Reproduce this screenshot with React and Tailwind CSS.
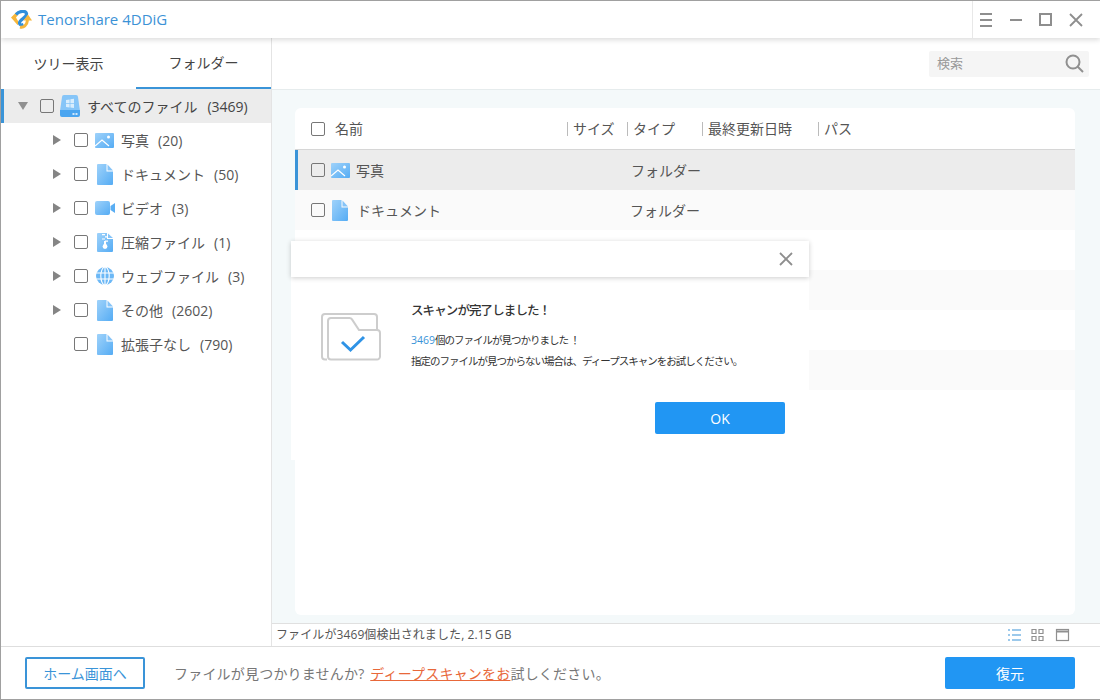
import { useId, useState } from "react";

const categories = [
  { name: "写真", count: 20, icon: "photo", arrow: true },
  { name: "ドキュメント", count: 50, icon: "doc", arrow: true },
  { name: "ビデオ", count: 3, icon: "video", arrow: true },
  { name: "圧縮ファイル", count: 1, icon: "zip", arrow: true },
  { name: "ウェブファイル", count: 3, icon: "web", arrow: true },
  { name: "その他", count: 2602, icon: "doc", arrow: true },
  { name: "拡張子なし", count: 790, icon: "doc", arrow: false },
];

const columns = [
  { label: "サイズ", width: "w-[60px]" },
  { label: "タイプ", width: "w-[75px]" },
  { label: "最終更新日時", width: "w-[116px]" },
  { label: "パス", width: "w-[80px]" },
];

const Checkbox = () => (
  <span className="block w-[14px] h-[14px] shrink-0 rounded-[2px] border border-[#777] bg-transparent" />
);

const Arrow = ({ down }) =>
  down ? (
    <svg width="12" height="10" viewBox="0 0 12 10" className="shrink-0">
      <path d="M1 1h10L6 9z" fill="#909090" />
    </svg>
  ) : (
    <svg width="9" height="12" viewBox="0 0 9 12" className="shrink-0">
      <path d="M1 1l8 5-8 5z" fill="#858585" />
    </svg>
  );

const Blue = ({ id }) => (
  <defs>
    <linearGradient id={id} x1="0" y1="0" x2="1" y2="1">
      <stop offset="0" stopColor="#9fd2fa" />
      <stop offset="1" stopColor="#55acf4" />
    </linearGradient>
  </defs>
);

const FileIcon = () => {
  const id = useId();
  return (
    <svg width="16" height="21" viewBox="0 0 16 21" className="shrink-0">
      <Blue id={id} />
      <path d="M1 0h8.500v7.500H16V20a1 1 0 0 1-1 1H1a1 1 0 0 1-1-1V1a1 1 0 0 1 1-1z" fill={`url(#${id})`} />
      <path d="M10.500 .5L16 6.500h-5.500z" fill="#86c4f8" />
    </svg>
  );
};

const PhotoIcon = () => {
  const id = useId();
  return (
    <svg width="19" height="15" viewBox="0 0 19 15" className="shrink-0">
      <Blue id={id} />
      <rect width="19" height="15" rx="1" fill={`url(#${id})`} />
      <circle cx="13.500" cy="4" r="1.500" fill="#fff" />
      <path d="M0 13L7 7l7 6" fill="none" stroke="#fff" strokeWidth="1.200" />
    </svg>
  );
};

const VideoIcon = () => {
  const id = useId();
  return (
    <svg width="20" height="14" viewBox="0 0 20 14" className="shrink-0">
      <Blue id={id} />
      <rect width="15" height="14" rx="2" fill={`url(#${id})`} />
      <path d="M15.500 5l4.500-3v10l-4.500-3z" fill="#5aaef3" />
    </svg>
  );
};

const ZipIcon = () => {
  const id = useId();
  return (
    <svg width="16" height="19" viewBox="0 0 16 19" className="shrink-0">
      <Blue id={id} />
      <path d="M1 0h9v6h6v12a1 1 0 0 1-1 1H1a1 1 0 0 1-1-1V1a1 1 0 0 1 1-1z" fill={`url(#${id})`} />
      <path d="M11 .5L16 5h-5z" fill="#86c4f8" />
      <path d="M5 1h3v1.200H5zM8 3.200h3v1.200H8zM5 5.400h3v1.200H5zM8 7.600h3v1.200H8z" fill="#fff" />
      <rect x="7" y="8" width="2" height="4" fill="#fff" />
      <circle cx="8" cy="13.500" r="2.400" fill="#fff" />
    </svg>
  );
};

const WebIcon = () => (
  <svg width="18" height="18" viewBox="0 0 18 18" className="shrink-0">
    <circle cx="9" cy="9" r="9" fill="#6cb8f6" />
    <path d="M0 6h18M0 12h18M9 0v18" stroke="#fff" strokeWidth="1.100" />
    <ellipse cx="9" cy="9" rx="4.200" ry="9" fill="none" stroke="#fff" strokeWidth="1.100" />
  </svg>
);

const DriveIcon = () => (
  <svg width="20" height="22" viewBox="0 0 20 22" className="shrink-0">
    <path d="M4 0h12a2 2 0 0 1 2 2l2 14H0L2 2a2 2 0 0 1 2-2z" fill="#86c5f8" />
    <path d="M6 5l3.600-.6V8H6zM10.400 4.300L14 3.800V8h-3.600zM6 8.800h3.600v3.600L6 12zM10.400 8.800H14v4.200l-3.600-.5z" fill="#d8edfd" />
    <path d="M0 15h20v5a2 2 0 0 1-2 2H2a2 2 0 0 1-2-2z" fill="#4aa5f0" />
    <rect x="12.500" y="18" width="2" height="2" fill="#cfe8fc" />
    <rect x="15.500" y="18" width="2" height="2" fill="#cfe8fc" />
  </svg>
);

const CategoryIcon = ({ type }) => {
  if (type === "photo") return <PhotoIcon />;
  if (type === "video") return <VideoIcon />;
  if (type === "zip") return <ZipIcon />;
  if (type === "web") return <WebIcon />;
  return <FileIcon />;
};

const Logo = () => (
  <svg width="21" height="19" viewBox="0 0 21 19" fill="none" className="shrink-0">
    <path d="M0 7.500L5.500 2 7 5 5 7.500l3.500 6L6.500 15z" fill="#f6b73c" />
    <path d="M5 4.500C8 1 14.500 0 15.500 3.500c1 3.500-7 6-7 9.500 0 2 2 2.500 4 1.500" stroke="#2f8fdc" strokeWidth="3.200" />
    <path d="M9 17c3.500 1 7-1.500 7.500-7" stroke="#f6b73c" strokeWidth="3" />
    <path d="M12.500 10.500L17 4.500l4 6z" fill="#f6b73c" />
  </svg>
);

const Title = () => (
  <div className="relative z-10 flex h-[37px] shrink-0 items-center bg-white pl-[10px] shadow-[0_2px_5px_rgba(0,0,0,0.14)]">
    <Logo />
    <span className="ml-[6px] text-[15px] text-[#3c92d6]">Tenorshare 4DDiG</span>
    <div className="ml-auto flex h-full w-[128px] items-center border-l border-[#e8e8e8]">
      <svg width="127" height="37" viewBox="0 0 127 37" fill="none" stroke="#8e8e8e" strokeWidth="2">
        <path d="M7 13h12M7 19h12M7 25h12" />
        <path d="M37 19h12" />
        <rect x="67" y="13" width="11" height="11" />
        <path d="M97 13l12 12M109 13l-12 12" strokeWidth="1.800" />
      </svg>
    </div>
  </div>
);

const Sidebar = () => (
  <aside className="w-[271px] shrink-0 border-r border-[#e4e4e4] bg-white">
    <div className="flex h-[51px] text-[14px] text-[#444]">
      <div className="flex w-[135px] items-center justify-center">ツリー表示</div>
      <div className="flex flex-1 items-center justify-center border-b-[2px] border-[#3a94d8]">フォルダー</div>
    </div>
    <div className="flex h-[34px] items-center border-l-[3px] border-[#3a94d8] bg-[#ececec] text-[14px] text-[#444]">
      <div className="ml-[13px]"><Arrow down /></div>
      <div className="ml-[11px]"><Checkbox /></div>
      <div className="ml-[6px]"><DriveIcon /></div>
      <span className="ml-[7px]">すべてのファイル</span>
      <span className="ml-[10px]">(3469)</span>
    </div>
    <ul>
      {categories.map((cat) => (
        <li key={cat.name} className="flex h-[34px] items-center pl-[50px] text-[14px] text-[#555]">
          <span className="w-[23px] pl-[1px]">{cat.arrow && <Arrow />}</span>
          <Checkbox />
          <span className="flex w-[33px] justify-center">
            <CategoryIcon type={cat.icon} />
          </span>
          <span>{cat.name}</span>
          <span className="ml-[9px]">({cat.count})</span>
        </li>
      ))}
    </ul>
  </aside>
);

const FileTable = () => (
  <div className="flex-1 overflow-hidden rounded-[6px] bg-white">
    <div className="flex h-[42px] items-center border-b border-[#d6d6d6] text-[14px] text-[#555]">
      <div className="flex w-[272px] items-center pl-[16px]">
        <Checkbox />
        <span className="ml-[10px]">名前</span>
      </div>
      {columns.map((col) => (
        <div key={col.label} className={`${col.width} flex h-[14px] items-center border-l border-[#bbb] pl-[5px]`}>
          {col.label}
        </div>
      ))}
    </div>
    <div className="flex h-[40px] items-center border-l-[3px] border-[#3a94d8] bg-[#ececec] pl-[13px] text-[14px] text-[#555]">
      <Checkbox />
      <span className="ml-[6px]"><PhotoIcon /></span>
      <span className="ml-[6px] w-[275px]">写真</span>
      <span>フォルダー</span>
    </div>
    <div className="flex h-[40px] items-center bg-[#fafafa] pl-[16px] text-[14px] text-[#555]">
      <Checkbox />
      <span className="ml-[7px]"><FileIcon /></span>
      <span className="ml-[9px] w-[273px]">ドキュメント</span>
      <span>フォルダー</span>
    </div>
    <div className="h-[40px]" />
    <div className="h-[40px] bg-[#fafafa]" />
    <div className="h-[40px]" />
    <div className="h-[40px] bg-[#fafafa]" />
  </div>
);

const StatusBar = () => (
  <div className="flex h-[23px] shrink-0 items-center border-t border-[#e0e0e0] bg-white pl-[4px] text-[12px] tracking-[0.1px] text-[#555]">
    <span>ファイルが3469個検出されました, 2.15 GB</span>
    <svg width="70" height="14" viewBox="0 0 70 14" className="ml-auto mr-[22px]" fill="none" strokeWidth="1.200">
      <path d="M0 2h2M0 7h2M0 12h2M4 2h9M4 7h9M4 12h9" stroke="#3a94d8" />
      <path d="M24 1.500h4v4h-4zM31 1.500h4v4h-4zM24 8.500h4v4h-4zM31 8.500h4v4h-4z" stroke="#909090" />
      <rect x="48.500" y="1.500" width="12" height="11" stroke="#909090" />
      <path d="M48 3.500h13" stroke="#909090" strokeWidth="2" />
    </svg>
  </div>
);

const Footer = () => (
  <div className="flex h-[53px] shrink-0 items-center border-t border-[#dedede] bg-white pl-[24px] pr-[25px]">
    <button className="h-[32px] w-[120px] rounded-[2px] border-2 border-[#3a94d8] text-[14px] text-[#3a94d8]">
      ホーム画面へ
    </button>
    <p className="ml-[29px] text-[14px] tracking-[0.2px] text-[#777]">
      ファイルが見つかりませんか? <span className="ml-[2px] text-[#e8683a] underline">ディープスキャンをお</span>試しください。
    </p>
    <button className="ml-auto h-[32px] w-[130px] rounded-[2px] bg-[#2196f3] text-[14px] text-white">復元</button>
  </div>
);

const ScanDialog = ({ onClose }) => (
  <div className="absolute left-[290px] top-[240px] h-[219px] w-[518px] bg-white">
    <div className="flex h-[36px] items-center justify-end bg-white pr-[16px] shadow-[0_1px_5px_rgba(0,0,0,0.2)]">
      <button onClick={onClose}>
        <svg width="14" height="14" viewBox="0 0 14 14" className="block" fill="none" stroke="#8e8e8e" strokeWidth="1.800">
          <path d="M1 1l12 12M13 1L1 13" />
        </svg>
      </button>
    </div>
    <div className="flex pl-[30px] pt-[25px]">
      <svg width="60" height="48" viewBox="0 0 60 48" className="mt-[11px] shrink-0" fill="none">
        <path d="M6 46.500H4a3 3 0 0 1-3-3V4a3 3 0 0 1 3-3h49a3 3 0 0 1 3 3v13" stroke="#cdcdcd" strokeWidth="2" />
        <path d="M10 46.500a3 3 0 0 1-3-3V8a3 3 0 0 1 3-3h18.500a3 3 0 0 1 2.500 1.400L38 17h18a3 3 0 0 1 3 3v23.500a3 3 0 0 1-3 3z" fill="#fff" stroke="#cdcdcd" strokeWidth="2" />
        <path d="M21 29l8.500 8L43 24" stroke="#2f93e6" strokeWidth="3" />
      </svg>
      <div className="ml-[30px]">
        <h2 className="text-[12.500px] font-medium leading-[18px] tracking-[-0.900px] text-[#333]">スキャンが完了しました！</h2>
        <p className="mt-[10px] whitespace-pre text-[10.500px] leading-[21px] tracking-[-1px] text-[#333]">
          <span className="tracking-normal text-[#3a94d8]">3469</span>個のファイルが見つかりました ！
          {"\n"}指定のファイルが見つからない場合は、ディープスキャンをお試しください。
        </p>
      </div>
    </div>
    <div className="flex justify-end pr-[24px] pt-[30px]">
      <button onClick={onClose} className="h-[32px] w-[130px] rounded-[2px] bg-[#2196f3] text-[14px] text-white">OK</button>
    </div>
  </div>
);

export default function App() {
  const [open, setOpen] = useState(true);

  return (
    <div
      className="relative flex h-[700px] w-[1100px] flex-col overflow-hidden border-y border-l border-[#a0a0a0] bg-white"
      style={{ fontFamily: '"Open Sans", "Noto Sans CJK JP", sans-serif' }}
    >
      <Title />
      <div className="flex min-h-0 flex-1">
        <Sidebar />
        <main className="flex min-w-0 flex-1 flex-col">
          <div className="flex h-[52px] shrink-0 items-center justify-end border-b border-[#e6eced] bg-white pr-[11px]">
            <div className="flex h-[26px] w-[160px] items-center justify-between rounded-[2px] bg-[#f5f5f5] pl-[8px] pr-[5px] text-[13px] text-[#999]">
              <span>検索</span>
              <svg width="19" height="19" viewBox="0 0 19 19" fill="none" stroke="#909090" strokeWidth="2">
                <circle cx="8" cy="8" r="6.500" />
                <path d="M12.500 12.500l5.500 5.500" />
              </svg>
            </div>
          </div>
          <div className="flex min-h-0 flex-1 bg-[#f4f9fa] pb-[8px] pl-[23px] pr-[25px] pt-[18px]">
            <FileTable />
          </div>
          <StatusBar />
        </main>
      </div>
      <Footer />
      {open && <ScanDialog onClose={() => setOpen(false)} />}
    </div>
  );
}
